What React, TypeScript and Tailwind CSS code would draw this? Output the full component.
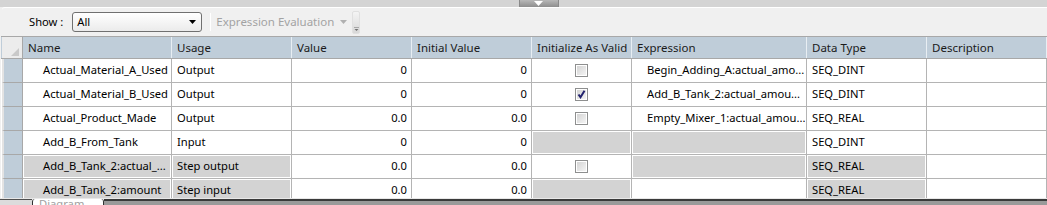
import React from 'react';

type Row = {
  name: string;
  usage: string;
  value: string;
  initial: string;
  valid: 'off' | 'on' | 'none';
  expr: string;
  type: string;
  grayName?: boolean;
  grayValid?: boolean;
  grayExpr?: boolean;
  grayType?: boolean;
};

const rows: Row[] = [
  { name: 'Actual_Material_A_Used', usage: 'Output', value: '0', initial: '0', valid: 'off', expr: 'Begin_Adding_A:actual_amo...', type: 'SEQ_DINT' },
  { name: 'Actual_Material_B_Used', usage: 'Output', value: '0', initial: '0', valid: 'on', expr: 'Add_B_Tank_2:actual_amou...', type: 'SEQ_DINT' },
  { name: 'Actual_Product_Made', usage: 'Output', value: '0.0', initial: '0.0', valid: 'off', expr: 'Empty_Mixer_1:actual_amou...', type: 'SEQ_REAL' },
  { name: 'Add_B_From_Tank', usage: 'Input', value: '0', initial: '0', valid: 'none', expr: '', type: 'SEQ_DINT', grayValid: true, grayExpr: true },
  { name: 'Add_B_Tank_2:actual_...', usage: 'Step output', value: '0.0', initial: '0.0', valid: 'off', expr: '', type: 'SEQ_REAL', grayName: true, grayExpr: true, grayType: true },
  { name: 'Add_B_Tank_2:amount', usage: 'Step input', value: '0.0', initial: '0.0', valid: 'none', expr: '', type: 'SEQ_REAL', grayName: true, grayValid: true, grayType: true },
];

const cols = 'grid grid-cols-[22px_149px_120px_120px_120px_100px_175px_120px_120px]';

function Checkbox({ checked }: { checked: boolean }) {
  return (
    <div className="w-[13px] h-[13px] border border-[#8e8f8f] bg-white p-px">
      <div className="w-full h-full bg-gradient-to-br from-[#d4d4d4] to-[#f4f4f4] flex items-center justify-center">
        {checked && (
          <svg width="9" height="9" viewBox="0 0 9 9">
            <path d="M1.5 4.5 L3.5 7.2 L7.5 0.8" fill="none" stroke="#22226e" strokeWidth="2" />
          </svg>
        )}
      </div>
    </div>
  );
}

function Cell({ gray, className = '', children }: { gray?: boolean; className?: string; children?: React.ReactNode }) {
  return (
    <div className="h-6 border-r border-b border-[#b4b4b4] p-px overflow-hidden">
      <div className={`h-full flex items-center whitespace-nowrap overflow-hidden ${gray ? 'bg-[#d3d3d3]' : 'bg-white'} ${className}`}>
        {children}
      </div>
    </div>
  );
}

export default function App() {
  return (
    <div className="w-[1047px] h-[205px] bg-[#f0f0f0] overflow-hidden flex flex-col text-[11.2px] text-black" style={{ fontFamily: '"Noto Sans", sans-serif' }}>
      {/* splitter strip */}
      <div className="h-[7px] bg-[#d4d4d4] flex justify-center shrink-0">
        <div className="ml-[30px] w-[40px] h-[7px] bg-gradient-to-b from-[#b8b8b8] to-[#8e8e8e] border-x border-[#8a8a8a] flex justify-center">
          <svg width="9" height="5" viewBox="0 0 9 5" className="mt-px">
            <path d="M0 0 H9 L4.5 5 Z" fill="#ffffff" />
          </svg>
        </div>
      </div>

      {/* toolbar */}
      <div className="h-[29px] shrink-0 flex items-center border-t border-white ml-[2px] rounded-tl-[3px]">
        <span className="ml-[27px] mr-[9px]">Show :</span>
        <div className="w-[130px] h-[20px] rounded-[3px] border border-[#707070] bg-gradient-to-b from-white to-[#ebebeb] flex items-center pl-[4px] pr-[5px]">
          <span className="flex-1">All</span>
          <svg width="7" height="4" viewBox="0 0 7 4">
            <path d="M0 0 H7 L3.5 4 Z" fill="#000" />
          </svg>
        </div>
        <div className="ml-[8px] w-px h-[18px] bg-[#c8c8c8] border-r border-white" />
        <span className="ml-[5px] text-[#a3a3a3] text-[11.5px]">Expression Evaluation</span>
        <svg width="7" height="4" viewBox="0 0 7 4" className="ml-[6px]">
          <path d="M0 0 H7 L3.5 4 Z" fill="#b0b0b0" />
        </svg>
        <div className="ml-[5px] w-[8px] h-[23px] mt-[1px] rounded-[2px] bg-gradient-to-b from-[#f4f4f4] to-[#d8d8d8] border border-[#e0e0e0] flex items-end justify-center pb-[2px]">
          <svg width="5" height="4" viewBox="0 0 5 4">
            <path d="M0 0 H5" stroke="#707070" strokeWidth="1" />
            <path d="M0.5 2 H4.5 L2.5 4 Z" fill="#707070" />
          </svg>
        </div>
      </div>

      {/* grid */}
      <div className="h-[162px] shrink-0 overflow-hidden bg-white ml-[1px]">
        <div className={`${cols} h-[23px] border-t border-b border-[#a8a8a8] bg-[#bfcdd9]`}>
          <div className="bg-[#ececec] border-r border-[#a8a8a8] ml-[1px] flex items-end justify-end pr-[3px] pb-[2px]">
            <svg width="8" height="8" viewBox="0 0 8 8">
              <path d="M8 0 V8 H0 Z" fill="#c9c9c9" />
            </svg>
          </div>
          {['Name', 'Usage', 'Value', 'Initial Value', 'Initialize As Valid', 'Expression', 'Data Type', 'Description'].map((h) => (
            <div key={h} className="border-r border-[#e8eef3] flex items-center pl-[5px] whitespace-nowrap text-[#1a1a1a] text-[11.5px]">
              {h}
            </div>
          ))}
        </div>
        {rows.map((r) => (
          <div key={r.name} className={cols}>
            <div className="h-6 border-r border-b border-[#a8a8a8] bg-[#bfcdd9] ml-[1px] border-l-2 border-l-[#e3e3e3]" />
            <Cell gray={r.grayName} className="pl-[19px]">{r.name}</Cell>
            <Cell gray={r.grayName} className="pl-[4px]">{r.usage}</Cell>
            <Cell className="justify-end pr-[3px]">{r.value}</Cell>
            <Cell className="justify-end pr-[3px]">{r.initial}</Cell>
            <Cell gray={r.grayValid} className="justify-center">
              {r.valid !== 'none' && <Checkbox checked={r.valid === 'on'} />}
            </Cell>
            <Cell gray={r.grayExpr} className="pl-[14px]">{r.expr}</Cell>
            <Cell gray={r.grayType} className="pl-[4px]">{r.type}</Cell>
            <Cell />
          </div>
        ))}
      </div>

      {/* bottom tab strip */}
      <div className="flex-1 border-t border-[#e8e8e8] flex">
        <div className="w-[32px] bg-[#dcdcdc] border-t border-[#505050]" />
        <div className="w-[72px] bg-white border-x border-[#303030] rounded-t-[3px] pl-[6px] text-[#a0a0a0] leading-[10px]">Diagram</div>
        <div className="flex-1 border-t-2 border-[#3a3a3a] bg-[#9a9a9a]" />
      </div>
    </div>
  );
}
